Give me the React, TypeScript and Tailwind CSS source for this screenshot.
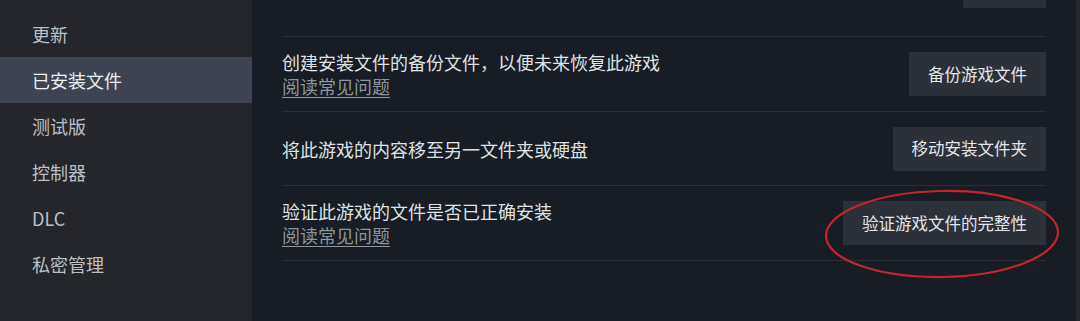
import React from 'react';

const navItems = ['更新', '已安装文件', '测试版', '控制器', 'DLC', '私密管理'];

const rows = [
  {
    title: '创建安装文件的备份文件，以便未来恢复此游戏',
    link: true,
    button: '备份游戏文件',
    height: 'h-[75px]',
  },
  {
    title: '将此游戏的内容移至另一文件夹或硬盘',
    link: false,
    button: '移动安装文件夹',
    height: 'h-[74px]',
  },
  {
    title: '验证此游戏的文件是否已正确安装',
    link: true,
    button: '验证游戏文件的完整性',
    height: 'h-[76px] border-b',
  },
];

export default function App() {
  return (
    <div
      className="relative flex h-[321px] w-[1080px] overflow-hidden bg-[#181c24]"
      style={{ fontFamily: '"Noto Sans CJK SC", "Noto Sans", sans-serif' }}
    >
      {/* Sidebar */}
      <div className="w-[252px] shrink-0 bg-[#24262c] pt-[11px]">
        {navItems.map((item) => {
          const active = item === '已安装文件';
          return (
            <div
              key={item}
              className={
                active
                  ? 'flex h-[46px] items-center bg-[#3d4350] pl-[32px] text-[18px] text-[#eceef0]'
                  : 'flex h-[46px] items-center pl-[32px] text-[18px] text-[#bcc0c4]'
              }
            >
              {item}
            </div>
          );
        })}
      </div>

      {/* Main */}
      <div className="flex-1 px-[30px]">
        <div className="flex h-[36px] justify-end">
          <div className="h-[8px] w-[83px] bg-[#2b2f37]" />
        </div>
        {rows.map((row) => (
          <div
            key={row.button}
            className={`flex items-center justify-between border-t border-[#2a2f37] ${row.height}`}
          >
            <div className="flex flex-col text-[18px] leading-[24px]">
              <span className="text-[#dfe1e3]">{row.title}</span>
              {row.link && (
                <span className="text-[#8d949c] underline underline-offset-[3px]">阅读常见问题</span>
              )}
            </div>
            <button className="h-[44px] bg-[#2c3039] px-[19px] text-[16.5px] text-[#e4e6e8]">
              {row.button}
            </button>
          </div>
        ))}
      </div>

      {/* Scrollbar track */}
      <div className="w-[4px] shrink-0 bg-[#262930]" />

      {/* Red annotation ellipse */}
      <svg
        className="pointer-events-none absolute left-[823px] top-[188px]"
        width="238"
        height="92"
        viewBox="0 0 238 92"
      >
        <ellipse
          cx="119"
          cy="46"
          rx="116"
          ry="43"
          fill="none"
          stroke="#c4262d"
          strokeWidth="2.2"
          transform="rotate(-1 119 46)"
        />
      </svg>
    </div>
  );
}
